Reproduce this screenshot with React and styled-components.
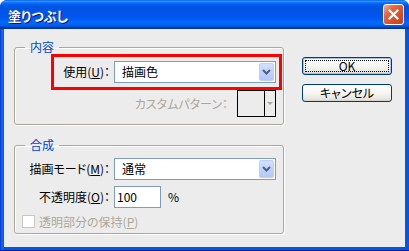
import React from "react";
import styled, { createGlobalStyle } from "styled-components";

const GlobalStyle = createGlobalStyle`
  html, body {
    margin: 0;
    padding: 0;
    background: #ffffff;
  }
  body {
    font-family: "Noto Sans CJK JP", "Noto Sans", sans-serif;
    font-size: 12px;
    font-feature-settings: "palt";
    color: #000;
  }
`;

const Window = styled.div`
  width: 409px;
  height: 251px;
  display: flex;
  flex-direction: column;
  border-radius: 7px 7px 0 0;
  overflow: hidden;
  background: linear-gradient(90deg, #0831d9 0px, #166aee 2px, #0855dd 4px);
  box-shadow: inset 0 -1px 0 #001ea0;
`;

const TitleBar = styled.div`
  height: 29px;
  flex: none;
  display: flex;
  align-items: center;
  justify-content: space-between;
  padding: 0 5px 0 8px;
  background: linear-gradient(
    180deg,
    #0058ee 0%,
    #3593ff 4%,
    #288eff 6%,
    #127dff 8%,
    #036ffc 10%,
    #0262ee 14%,
    #0057e5 20%,
    #0054e3 24%,
    #0055eb 56%,
    #005bf5 66%,
    #026afe 76%,
    #0062ef 86%,
    #0052d6 92%,
    #0040ab 94%,
    #003092 100%
  );
`;

const Title = styled.div`
  color: #fff;
  font-weight: bold;
  font-size: 13px;
  line-height: 16px;
  padding-top: 2px;
  text-shadow: 1px 1px 0 #0f1089;
`;

const CloseButton = styled.div`
  width: 21px;
  height: 21px;
  box-sizing: border-box;
  border: 1px solid #fff;
  border-radius: 3px;
  display: flex;
  align-items: center;
  justify-content: center;
  background: linear-gradient(135deg, #f5b09a 0%, #e5683f 30%, #d9471e 75%, #c8401a 100%);
`;

const Body = styled.div`
  flex: 1;
  margin: 0 4px 4px 4px;
  background: #ececec;
  display: flex;
  align-items: flex-start;
  gap: 18px;
  padding: 11px 13px 0 10px;
`;

const LeftColumn = styled.div`
  width: 270px;
  display: flex;
  flex-direction: column;
  gap: 13px;
`;

const Group = styled.fieldset`
  margin: 0;
  padding: 0;
  min-width: 0;
  border: 1px solid #aca899;
  border-radius: 3px;
  box-shadow: 1px 1px 0 #fff, inset 1px 1px 0 #fff;
`;

const Legend = styled.legend`
  margin-left: 10px;
  padding: 0 5px;
  color: #0046d5;
  line-height: 14px;
`;

const UseRow = styled.div`
  margin-left: 36px;
  width: 231px;
  height: 36px;
  box-sizing: border-box;
  border: 3px solid #ff0000;
  display: flex;
  align-items: center;
`;

const FieldLabel = styled.label`
  width: ${(p) => p.$w}px;
  flex: none;
  box-sizing: border-box;
  padding-right: 4px;
  text-align: right;
  line-height: 16px;
  white-space: nowrap;
`;

const Combo = styled.div`
  width: 162px;
  height: 22px;
  box-sizing: border-box;
  border: 1px solid #7f9db9;
  background: #fff;
  display: flex;
  padding: 1px;
`;

const ComboText = styled.div`
  flex: 1;
  padding-left: 6px;
  line-height: 18px;
`;

const ComboButton = styled.div`
  width: 15px;
  box-sizing: border-box;
  border: 1px solid #bccffa;
  border-radius: 2px;
  background: linear-gradient(180deg, #d4e1fd 0%, #c1d3fb 50%, #b4c8f6 100%);
  display: flex;
  align-items: center;
  justify-content: center;
`;

const PatternRow = styled.div`
  height: 27px;
  display: flex;
  justify-content: flex-end;
  align-items: center;
  padding-right: 7px;
  margin-bottom: 7px;
`;

const DisabledText = styled.span`
  color: #aca899;
  line-height: 14px;
  white-space: nowrap;
`;

const PatternBox = styled.div`
  width: 39px;
  height: 27px;
  box-sizing: border-box;
  border: 1px solid #000;
  margin-left: 9px;
  display: flex;
`;

const PatternSwatch = styled.div`
  width: 26px;
  border-right: 1px solid #000;
`;

const PatternArrow = styled.div`
  flex: 1;
  display: flex;
  align-items: center;
  justify-content: center;
  &::after {
    content: "";
    border-left: 3px solid transparent;
    border-right: 3px solid transparent;
    border-top: 3px solid #aca899;
  }
`;

const BlendContent = styled.div`
  display: flex;
  flex-direction: column;
  gap: 6px;
  padding: 6px 0 5px;
`;

const FormRow = styled.div`
  height: 22px;
  display: flex;
  align-items: center;
`;

const TextBox = styled.div`
  width: 47px;
  height: 22px;
  box-sizing: border-box;
  border: 1px solid #7f9db9;
  background: #fff;
  padding-left: 2px;
  line-height: 20px;
`;

const Unit = styled.span`
  margin-left: 7px;
  line-height: 16px;
`;

const CheckRow = styled.div`
  height: 13px;
  margin-top: 1px;
  padding-left: 7px;
  display: flex;
  align-items: center;
  gap: 4px;
`;

const CheckBox = styled.div`
  width: 13px;
  height: 13px;
  box-sizing: border-box;
  border: 1px solid #cac8bb;
  background: #fff;
`;

const ButtonColumn = styled.div`
  margin-top: 17px;
  display: flex;
  flex-direction: column;
  gap: 9px;
`;

const Button = styled.div`
  position: relative;
  width: 90px;
  height: 18px;
  box-sizing: border-box;
  border: 1px solid #003c74;
  border-radius: 3px;
  background: linear-gradient(180deg, #ffffff 0%, #f4f4f0 55%, #e6e5de 88%, #d6d0c5 100%);
  display: flex;
  align-items: center;
  justify-content: center;
  line-height: 14px;
  box-shadow: ${(p) => (p.$default ? "inset 0 0 0 1px #a6c1f5" : "none")};

  &::after {
    content: "";
    display: ${(p) => (p.$default ? "block" : "none")};
    position: absolute;
    inset: 2px;
    border: 1px dotted #000;
  }
`;

const CloseIcon = () => (
  <svg width="11" height="11" viewBox="0 0 11 11">
    <path d="M1.5 1.5 L9.5 9.5 M9.5 1.5 L1.5 9.5" stroke="#fff" strokeWidth="2.2" strokeLinecap="square" />
  </svg>
);

const ComboArrow = () => (
  <svg width="9" height="6" viewBox="0 0 9 6">
    <path d="M1 1 L4.5 4.5 L8 1" fill="none" stroke="#4d6185" strokeWidth="2" />
  </svg>
);

const Select = ({ value }) => (
  <Combo>
    <ComboText>{value}</ComboText>
    <ComboButton>
      <ComboArrow />
    </ComboButton>
  </Combo>
);

const App = () => {
  return (
    <>
      <GlobalStyle />
      <Window>
        <TitleBar>
          <Title>塗りつぶし</Title>
          <CloseButton>
            <CloseIcon />
          </CloseButton>
        </TitleBar>
        <Body>
          <LeftColumn>
            <Group>
              <Legend>内容</Legend>
              <UseRow>
                <FieldLabel $w={60}>
                  使用(<u>U</u>)：
                </FieldLabel>
                <Select value="描画色" />
              </UseRow>
              <PatternRow>
                <DisabledText>カスタムパターン：</DisabledText>
                <PatternBox>
                  <PatternSwatch />
                  <PatternArrow />
                </PatternBox>
              </PatternRow>
            </Group>
            <Group>
              <Legend>合成</Legend>
              <BlendContent>
                <FormRow>
                  <FieldLabel $w={99}>
                    描画モード(<u>M</u>)：
                  </FieldLabel>
                  <Select value="通常" />
                </FormRow>
                <FormRow>
                  <FieldLabel $w={99}>
                    不透明度(<u>O</u>)：
                  </FieldLabel>
                  <TextBox>100</TextBox>
                  <Unit>%</Unit>
                </FormRow>
                <CheckRow>
                  <CheckBox />
                  <DisabledText>
                    透明部分の保持(<u>P</u>)
                  </DisabledText>
                </CheckRow>
              </BlendContent>
            </Group>
          </LeftColumn>
          <ButtonColumn>
            <Button $default>OK</Button>
            <Button>キャンセル</Button>
          </ButtonColumn>
        </Body>
      </Window>
    </>
  );
};

export default App;
